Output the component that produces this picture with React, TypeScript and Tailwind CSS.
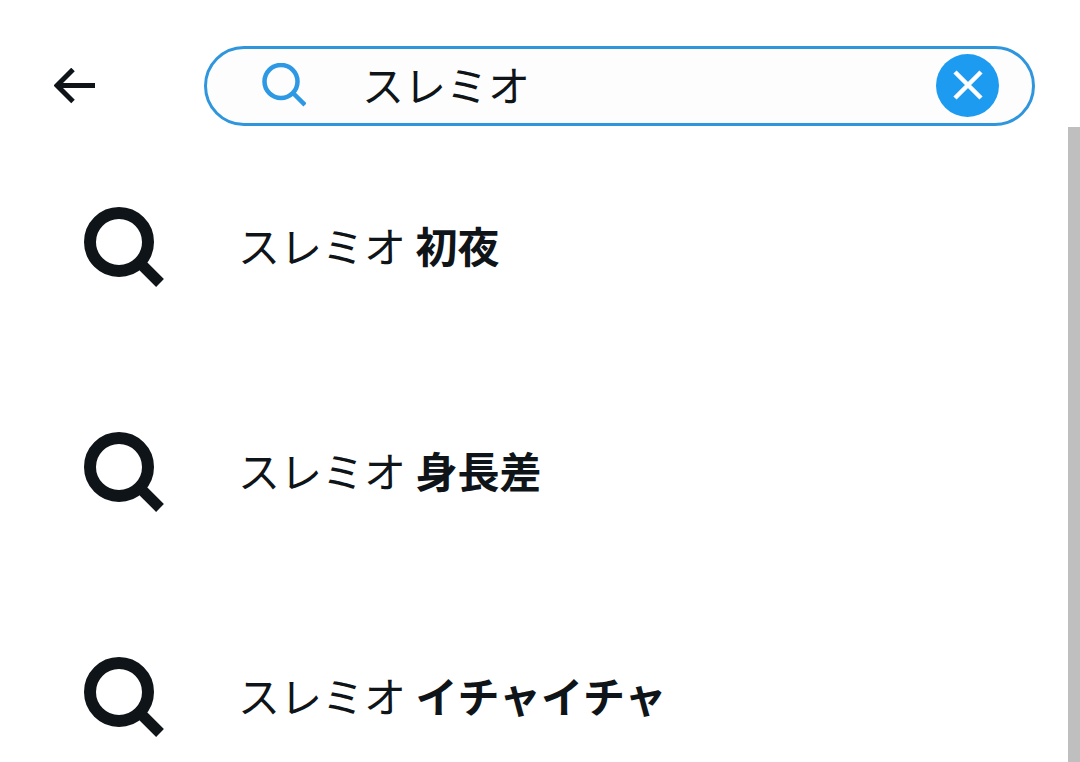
import { useState } from "react";

const suggestions = [
  { id: 1, base: "スレミオ", extra: "初夜" },
  { id: 2, base: "スレミオ", extra: "身長差" },
  { id: 3, base: "スレミオ", extra: "イチャイチャ" },
];

export default function App() {
  const [query, setQuery] = useState("スレミオ");

  return (
    <div className="h-screen overflow-hidden flex flex-col bg-white text-[#0f1419] font-['Noto_Sans_CJK_JP',sans-serif]">
      <header className="flex items-center pt-[46px] pl-[54px] pr-[45px]">
        <button type="button" aria-label="戻る" className="mr-[108px] shrink-0">
          <svg className="w-[42px] h-9" viewBox="0 0 42 36" fill="none" stroke="currentColor" strokeWidth="5">
            <path d="M19 1.5L3 17.5l16 16M3 17.5h38" />
          </svg>
        </button>
        <form onSubmit={(e) => e.preventDefault()} className="flex-1 min-w-0 h-20 flex items-center border-3 border-[#2f96dd] rounded-full bg-[#fdfdfd] pl-[55px] pr-[33px] pb-0.5">
          <svg className="w-11 h-11 shrink-0 text-[#2d98e4]" viewBox="0 0 44 44" fill="none" stroke="currentColor" strokeWidth="4.5">
            <circle cx="19" cy="18.5" r="16.5" />
            <path d="M31 30l12 12" />
          </svg>
          <input
            type="text"
            aria-label="検索"
            value={query}
            onChange={(e) => setQuery(e.target.value)}
            className="flex-1 min-w-0 ml-14 pb-0.5 text-[42px] leading-[60px] outline-none bg-transparent"
          />
          <button type="button" aria-label="クリア" onClick={() => setQuery("")} className="shrink-0 w-[63px] h-[63px] flex items-center justify-center rounded-full bg-[#1d9bf0] text-white">
            <svg className="w-8 h-8" viewBox="0 0 32 32" fill="none" stroke="currentColor" strokeWidth="4.5">
              <path d="M3 3l26 26M29 3L3 29" />
            </svg>
          </button>
        </form>
      </header>

      <div className="flex-1 min-h-0 flex mt-px">
        <ul className="flex-1 min-w-0 pt-[7px]">
          {suggestions.map((s) => (
            <li key={s.id}>
              <button type="button" onClick={() => setQuery(`${s.base} ${s.extra}`)} className="w-full h-[225px] flex items-center pl-21 text-left">
                <svg className="w-20 h-20 shrink-0" viewBox="0 0 80 80" fill="none" stroke="currentColor">
                  <circle cx="35" cy="35" r="29" strokeWidth="12" />
                  <path d="M55 55l21 21" strokeWidth="11" />
                </svg>
                <span className="ml-[74px] pb-1 text-[42px] leading-[60px] whitespace-nowrap">
                  {s.base} <b className="font-bold">{s.extra}</b>
                </span>
              </button>
            </li>
          ))}
        </ul>
        <div className="w-3 bg-[#bfbfbf]" />
      </div>
    </div>
  );
}
